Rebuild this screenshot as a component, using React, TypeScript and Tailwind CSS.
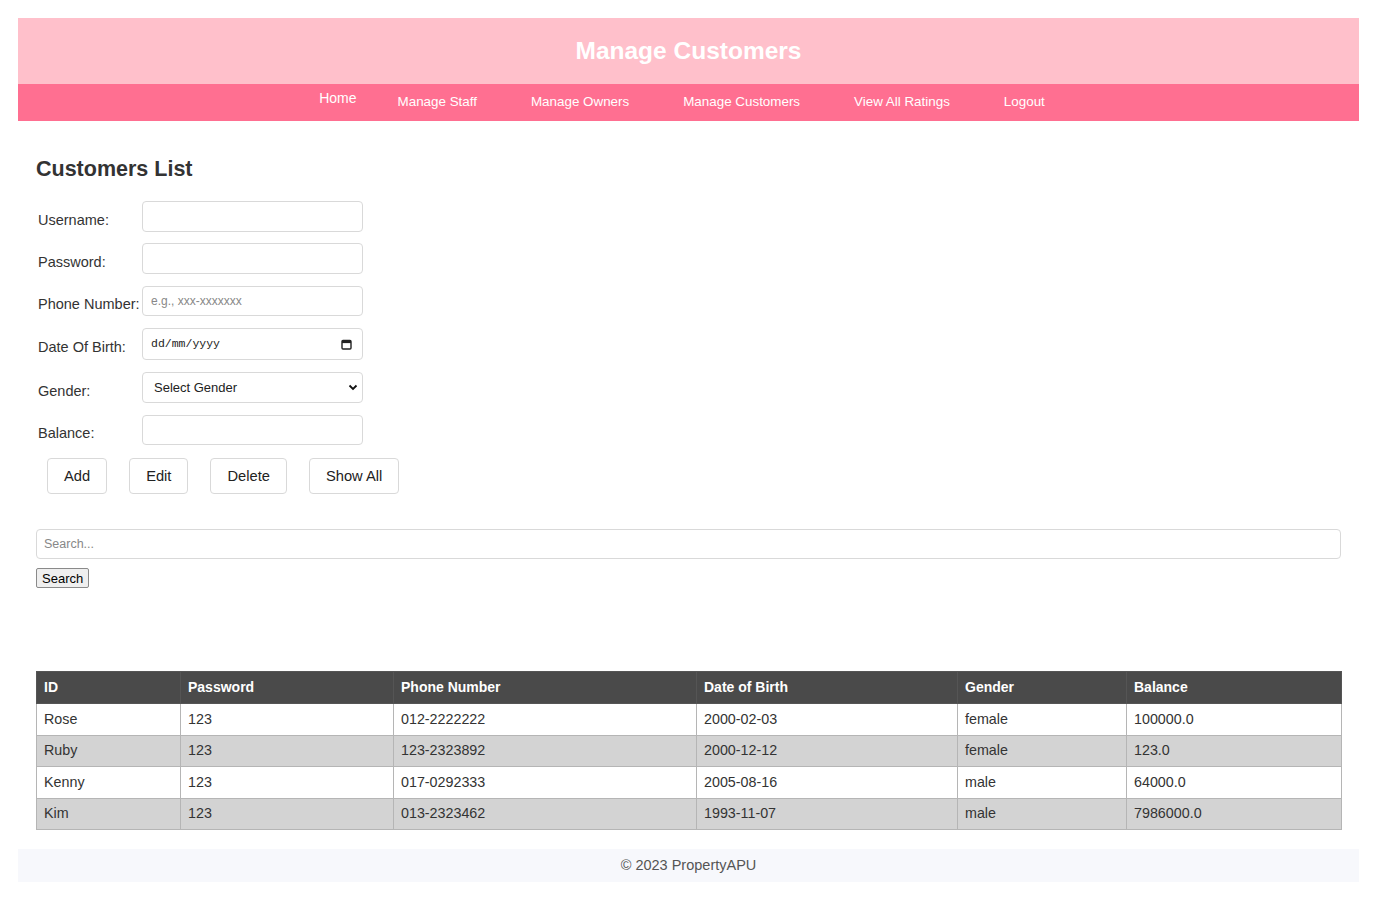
// Manage Customers - admin page with customer form, search and list

const FONT = { fontFamily: '"Liberation Sans", Arial, sans-serif' };

const NAV_LINKS = ['Manage Staff', 'Manage Owners', 'Manage Customers', 'View All Ratings', 'Logout'];

const CUSTOMERS = [
  { id: 'Rose',  password: '123', phone: '012-2222222', dob: '2000-02-03', gender: 'female', balance: '100000.0' },
  { id: 'Ruby',  password: '123', phone: '123-2323892', dob: '2000-12-12', gender: 'female', balance: '123.0' },
  { id: 'Kenny', password: '123', phone: '017-0292333', dob: '2005-08-16', gender: 'male',   balance: '64000.0' },
  { id: 'Kim',   password: '123', phone: '013-2323462', dob: '1993-11-07', gender: 'male',   balance: '7986000.0' },
];

const COLUMNS = [
  { label: 'ID',            width: 'w-[144px]' },
  { label: 'Password',      width: 'w-[213px]' },
  { label: 'Phone Number',  width: 'w-[303px]' },
  { label: 'Date of Birth', width: 'w-[261px]' },
  { label: 'Gender',        width: 'w-[169px]' },
  { label: 'Balance',       width: 'w-[215px]' },
];

// -- Form row -------------------------------------------------------------------

function FormRow({ label, children, mt }: { label: string; children: React.ReactNode; mt: string }) {
  return (
    <div className={`flex items-center ${mt}`}>
      <label className="w-[106px] pl-[2px] pt-[8px] text-[14.5px] text-[#333]">{label}</label>
      {children}
    </div>
  );
}

const inputCls =
  'w-[221px] rounded-[4px] border border-[#d9d9d9] bg-white px-[8px] text-[12px] text-[#333] outline-none';

function CalendarIcon() {
  return (
    <svg width="11" height="11" viewBox="0 0 11 11" aria-hidden>
      <rect x="1" y="1.5" width="9" height="8.5" rx="1" fill="none" stroke="#222" strokeWidth="1.4" />
      <rect x="1" y="1.5" width="9" height="2.6" fill="#222" />
    </svg>
  );
}

function ChevronDown() {
  return (
    <svg width="10" height="7" viewBox="0 0 10 7" aria-hidden>
      <path d="M1.5 1.5 L5 5 L8.5 1.5" fill="none" stroke="#111" strokeWidth="1.8" />
    </svg>
  );
}

// -- Page -------------------------------------------------------------------------

export default function App() {
  return (
    <div className="min-h-screen bg-white p-[18px]" style={FONT}>
      {/* header */}
      <header className="flex h-[66px] items-center justify-center bg-[#ffc0cb]">
        <h1 className="text-[24.5px] font-bold text-white">Manage Customers</h1>
      </header>

      {/* nav */}
      <nav className="flex h-[37px] items-center justify-center bg-[#ff6f91]">
        <a className="-translate-y-[4px] px-[14px] text-[14px] text-white">Home</a>
        {NAV_LINKS.map((l) => (
          <a key={l} className="px-[27px] text-[13.4px] text-white">{l}</a>
        ))}
      </nav>

      <main className="px-[18px]">
        <h2 className="mt-[35px] text-[21.5px] font-bold leading-[26px] text-[#333]">Customers List</h2>

        <div className="mt-[19px]">
          <FormRow label="Username:" mt="">
            <input className={`${inputCls} h-[31px]`} />
          </FormRow>
          <FormRow label="Password:" mt="mt-[11px]">
            <input type="password" className={`${inputCls} h-[31px]`} />
          </FormRow>
          <FormRow label="Phone Number:" mt="mt-[12px]">
            <input
              className={`${inputCls} h-[30px] text-[11px] placeholder:text-[#888]`}
              placeholder="e.g., xxx-xxxxxxx"
            />
          </FormRow>
          <FormRow label="Date Of Birth:" mt="mt-[12px]">
            <div className={`${inputCls} flex h-[32px] items-center justify-between pr-[10px]`}>
              <span className="text-[11.5px] text-[#222]" style={{ fontFamily: '"Liberation Mono", monospace' }}>
                dd/mm/yyyy
              </span>
              <CalendarIcon />
            </div>
          </FormRow>
          <FormRow label="Gender:" mt="mt-[12px]">
            <div className={`${inputCls} flex h-[31px] items-center justify-between pl-[11px] pr-[4px]`}>
              <span className="text-[13px] text-[#222]">Select Gender</span>
              <ChevronDown />
            </div>
          </FormRow>
          <FormRow label="Balance:" mt="mt-[12px]">
            <input className={`${inputCls} h-[30px]`} />
          </FormRow>

          <div className="mt-[13px] flex">
            {['Add', 'Edit', 'Delete', 'Show All'].map((b) => (
              <button
                key={b}
                className="mx-[11px] h-[36px] rounded-[4px] border border-[#d9d9d9] bg-white px-[16px] text-[14.7px] text-[#222]"
              >
                {b}
              </button>
            ))}
          </div>
        </div>

        {/* search */}
        <input
          className="mt-[35px] block h-[30px] w-full rounded-[4px] border border-[#d9d9d9] px-[7px] text-[12.5px] outline-none placeholder:text-[#888]"
          placeholder="Search..."
        />
        <button className="mt-[9px] block h-[20px] rounded-[2px] border border-[#8a8a8a] bg-[#efefef] px-[5px] text-[13px] leading-none text-black">
          Search
        </button>

        {/* table */}
        <table className="mt-[83px] w-full table-fixed border-collapse text-[14.3px]">
          <thead>
            <tr className="h-[32px] bg-[#4a4a4a]">
              {COLUMNS.map((c) => (
                <th
                  key={c.label}
                  className={`${c.width} border border-[#555] px-[7px] text-left text-[14px] font-bold text-white`}
                >
                  {c.label}
                </th>
              ))}
            </tr>
          </thead>
          <tbody>
            {CUSTOMERS.map((c, i) => (
              <tr key={c.id} className={`h-[31.5px] ${i % 2 ? 'bg-[#d3d3d3]' : 'bg-white'}`}>
                {[c.id, c.password, c.phone, c.dob, c.gender, c.balance].map((v, j) => (
                  <td key={j} className="border border-[#b5b5b5] px-[7px] text-[#333]">
                    {v}
                  </td>
                ))}
              </tr>
            ))}
          </tbody>
        </table>
      </main>

      {/* footer */}
      <footer className="mt-[19px] flex h-[33px] items-center justify-center bg-[#f7f8fc] text-[14.5px] text-[#555]">
        © 2023 PropertyAPU
      </footer>
    </div>
  );
}
